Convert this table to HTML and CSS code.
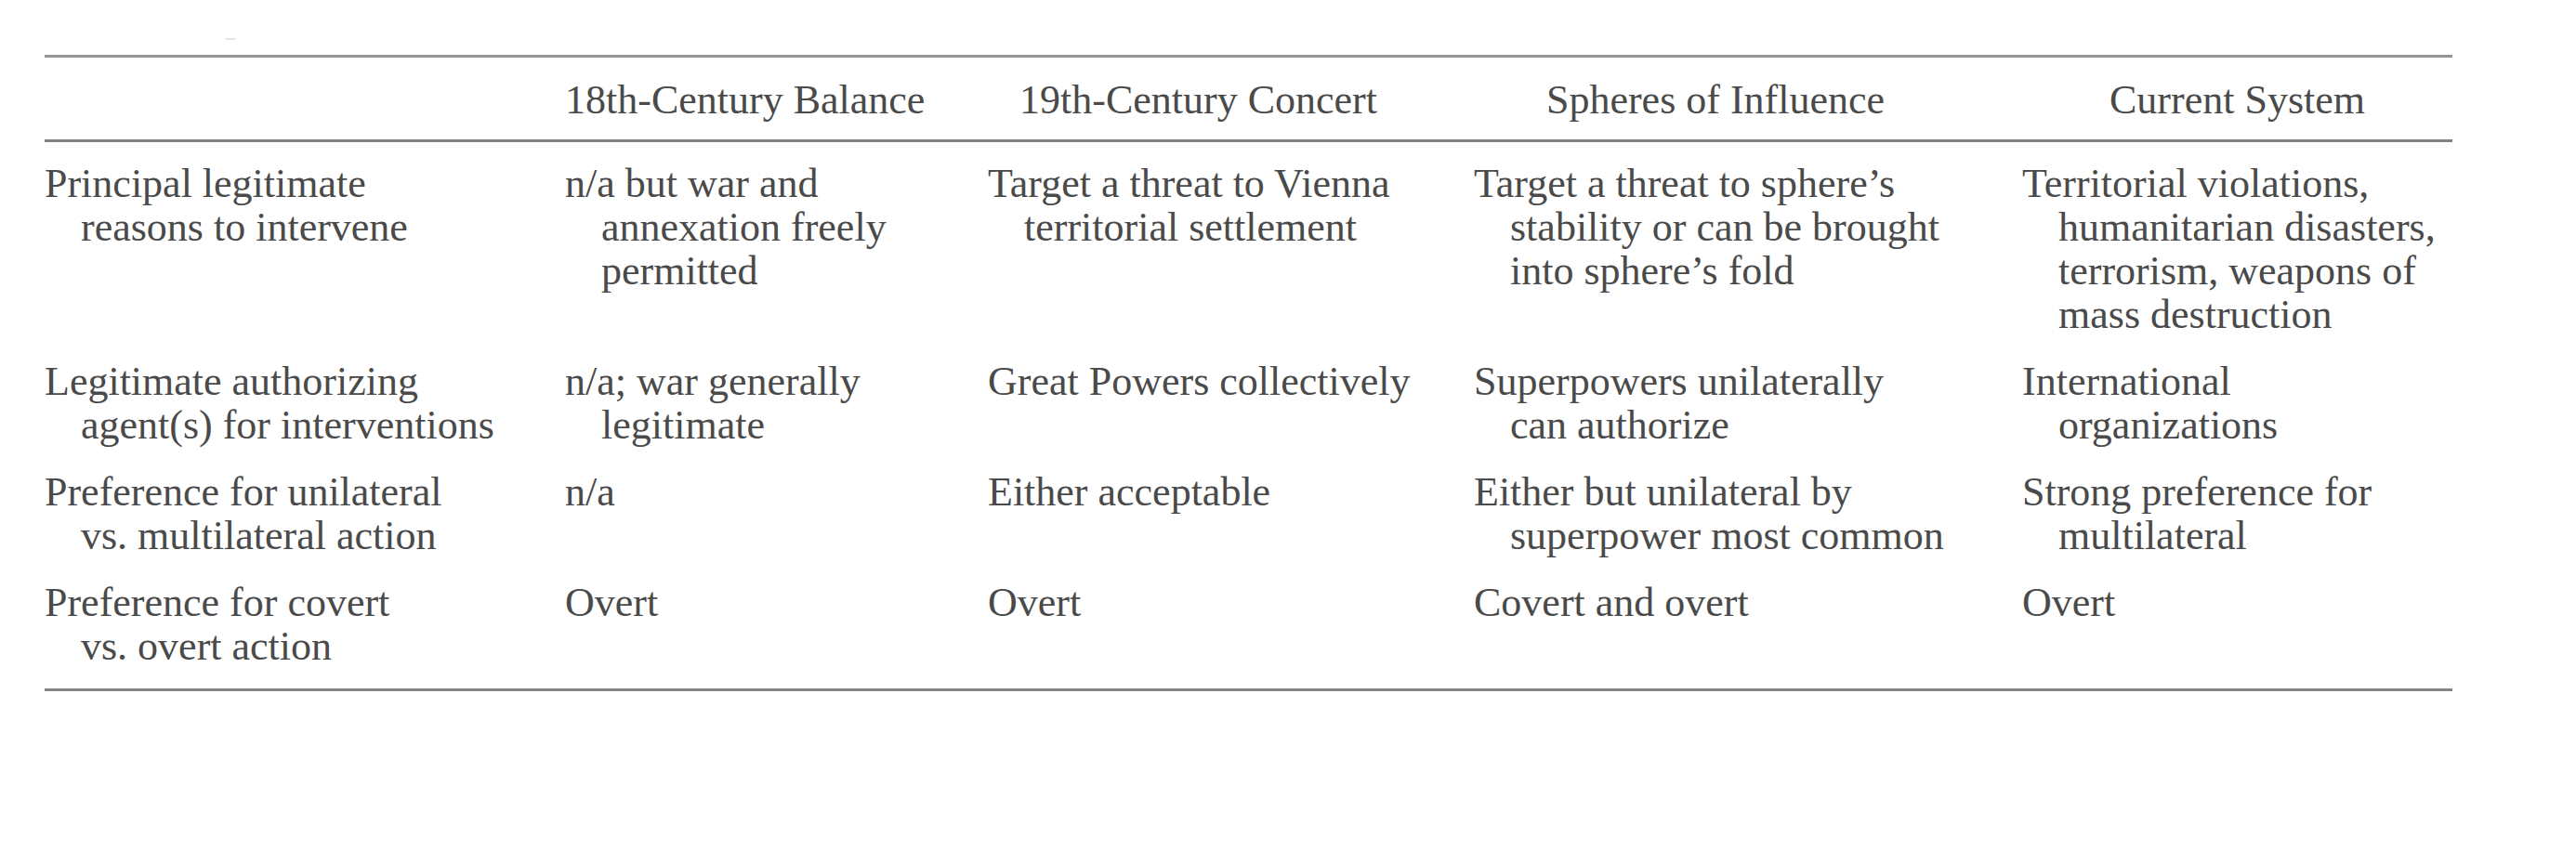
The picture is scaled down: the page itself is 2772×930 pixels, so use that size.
FILE: index.html
```html
<!DOCTYPE html>
<html lang="en">
<head>
<meta charset="utf-8">
<title>Intervention norms table</title>
<link rel="stylesheet" href="styles.css">
</head>
<body>
<div class="page">
  <div class="speck"></div>
  <div class="table">
    <div class="row head">
      <div class="cell"></div>
      <div class="cell th">18th-Century Balance</div>
      <div class="cell th">19th-Century Concert</div>
      <div class="cell th">Spheres of Influence</div>
      <div class="cell th">Current System</div>
    </div>
    <div class="body">
      <div class="cell">Principal legitimate<br>reasons to intervene</div>
      <div class="cell">n/a but war and<br>annexation freely<br>permitted</div>
      <div class="cell">Target a threat to Vienna<br>territorial settlement</div>
      <div class="cell">Target a threat to sphere’s<br>stability or can be brought<br>into sphere’s fold</div>
      <div class="cell">Territorial violations,<br>humanitarian disasters,<br>terrorism, weapons of<br>mass destruction</div>

      <div class="cell">Legitimate authorizing<br>agent(s) for interventions</div>
      <div class="cell">n/a; war generally<br>legitimate</div>
      <div class="cell">Great Powers collectively</div>
      <div class="cell">Superpowers unilaterally<br>can authorize</div>
      <div class="cell">International<br>organizations</div>

      <div class="cell">Preference for unilateral<br>vs. multilateral action</div>
      <div class="cell">n/a</div>
      <div class="cell">Either acceptable</div>
      <div class="cell">Either but unilateral by<br>superpower most common</div>
      <div class="cell">Strong preference for<br>multilateral</div>

      <div class="cell">Preference for covert<br>vs. overt action</div>
      <div class="cell">Overt</div>
      <div class="cell">Overt</div>
      <div class="cell">Covert and overt</div>
      <div class="cell">Overt</div>
    </div>
  </div>
</div>
</body>
</html>
```

FILE: styles.css
```css
html, body {
  margin: 0;
  padding: 0;
  background: #ffffff;
}

body {
  font-family: "Liberation Serif", "Times New Roman", serif;
  font-size: 44px;
  line-height: 47px;
  color: #4a4a4a;
}

.page {
  padding: 41px 0 0 48px;
}

.speck {
  width: 10px;
  height: 2px;
  margin-left: 195px;
  margin-bottom: 16px;
  background: #e2e2e2;
}

.table {
  width: 2591px;
  border-top: 3px solid #959595;
  border-bottom: 3px solid #858585;
}

.row,
.body {
  display: grid;
  grid-template-columns: 490px 385px 453px 520px 463px;
  column-gap: 70px;
}

.head {
  padding: 22px 0 19px;
  border-bottom: 3px solid #828282;
}

.body {
  row-gap: 25px;
  padding: 21px 0 22px;
}

.cell {
  white-space: nowrap;
  padding-left: 39px;
  text-indent: -39px;
}

.th {
  padding-left: 0;
  text-indent: 0;
  text-align: center;
}
```
